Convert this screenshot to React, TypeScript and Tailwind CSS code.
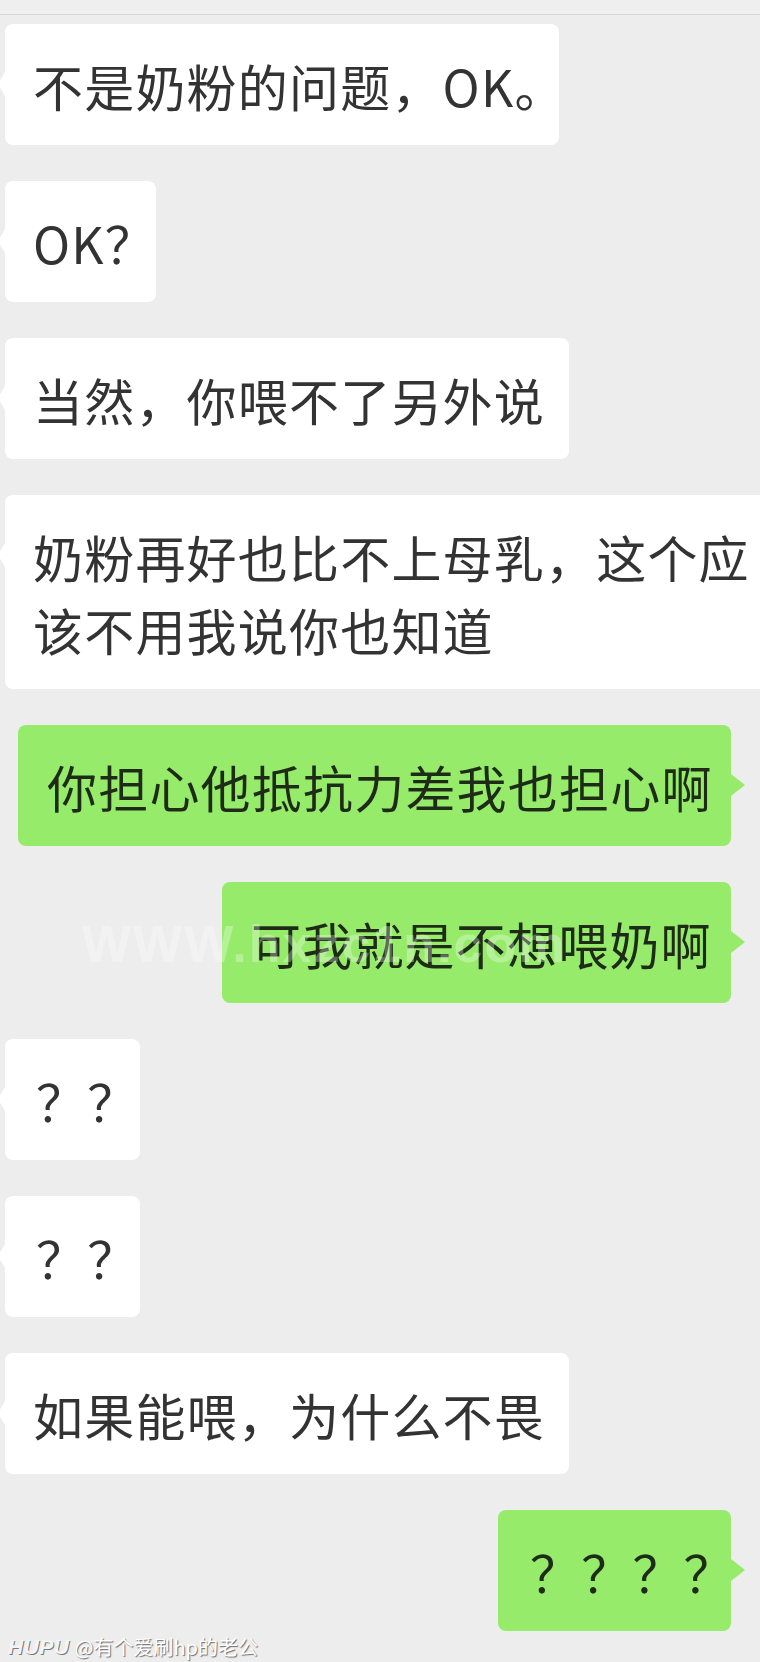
import React from "react";

type Msg = {
  side: "left" | "right";
  lines: string[];
  cls: string;
};

const messages: Msg[] = [
  { side: "left", lines: ["不是奶粉的问题，OK。"], cls: "w-[554px] pl-[28px]" },
  { side: "left", lines: ["OK？"], cls: "w-[151px] pl-[28px]" },
  { side: "left", lines: ["当然，你喂不了另外说"], cls: "w-[564px] pl-[28px]" },
  {
    side: "left",
    lines: ["奶粉再好也比不上母乳，这个应", "该不用我说你也知道"],
    cls: "w-[790px] pl-[28px]",
  },
  { side: "right", lines: ["你担心他抵抗力差我也担心啊"], cls: "w-[713px] pl-[29px]" },
  { side: "right", lines: ["可我就是不想喂奶啊"], cls: "w-[509px] pl-[29px]" },
  { side: "left", lines: ["？？"], cls: "w-[135px] pl-[31px]" },
  { side: "left", lines: ["？？"], cls: "w-[135px] pl-[31px]" },
  { side: "left", lines: ["如果能喂，为什么不畏"], cls: "w-[564px] pl-[28px]" },
  { side: "right", lines: ["？？？？"], cls: "w-[233px] pl-[32px]" },
];

function Bubble({ m }: { m: Msg }) {
  if (m.side === "left") {
    return (
      <div
        className={`relative ml-[5px] shrink-0 self-start whitespace-nowrap rounded-[8px] bg-white pt-[25px] pb-[23px] text-[50px] leading-[73px] tracking-[1.2px] text-[#333333] ${m.cls}`}
      >
        <span className="absolute -left-[7px] top-[48px] h-0 w-0 border-y-[12px] border-r-[7px] border-y-transparent border-r-white" />
        {m.lines.map((l, i) => (
          <div key={i}>{l}</div>
        ))}
      </div>
    );
  }
  return (
    <div
      className={`relative mr-[29px] shrink-0 self-end whitespace-nowrap rounded-[8px] bg-[#96eb6b] pt-[25px] pb-[23px] text-[50px] leading-[73px] tracking-[1.2px] text-[#1e2b17] ${m.cls}`}
    >
      <span className="absolute -right-[14px] top-[49px] h-0 w-0 border-y-[11px] border-l-[14px] border-y-transparent border-l-[#96eb6b]" />
      {m.lines.map((l, i) => (
        <div key={i}>{l}</div>
      ))}
    </div>
  );
}

export default function App() {
  return (
    <div className="relative h-[1662px] w-[760px] overflow-hidden bg-[#ededed] font-['Noto_Sans_CJK_SC','Noto_Sans',sans-serif]">
      <div className="h-[14px] bg-[#efefef]" />
      <div className="h-px bg-[#d5d5d5]" />
      <div className="flex flex-col gap-[36px] pt-[9px]">
        {messages.map((m, i) => (
          <Bubble key={i} m={m} />
        ))}
      </div>
      <div className="flex h-[31px] items-center gap-[5px] pl-[8px] text-[20px] leading-none text-white [text-shadow:1px_1px_1px_rgba(0,0,0,0.55)]">
        <span className="font-['Liberation_Sans',sans-serif] text-[21px] font-bold italic tracking-[0.5px] text-[#f4f4f4] [text-shadow:1px_1px_0_rgba(90,90,90,0.8)]">
          HUPU
        </span>
        <span>@有个爱刷hp的老公</span>
      </div>
      <div className="pointer-events-none absolute left-[82px] top-[918px] select-none font-['Liberation_Sans',sans-serif] text-[52px] font-bold leading-none tracking-[2px] text-white/30">
        WWW.hxzc1n.com
      </div>
    </div>
  );
}
